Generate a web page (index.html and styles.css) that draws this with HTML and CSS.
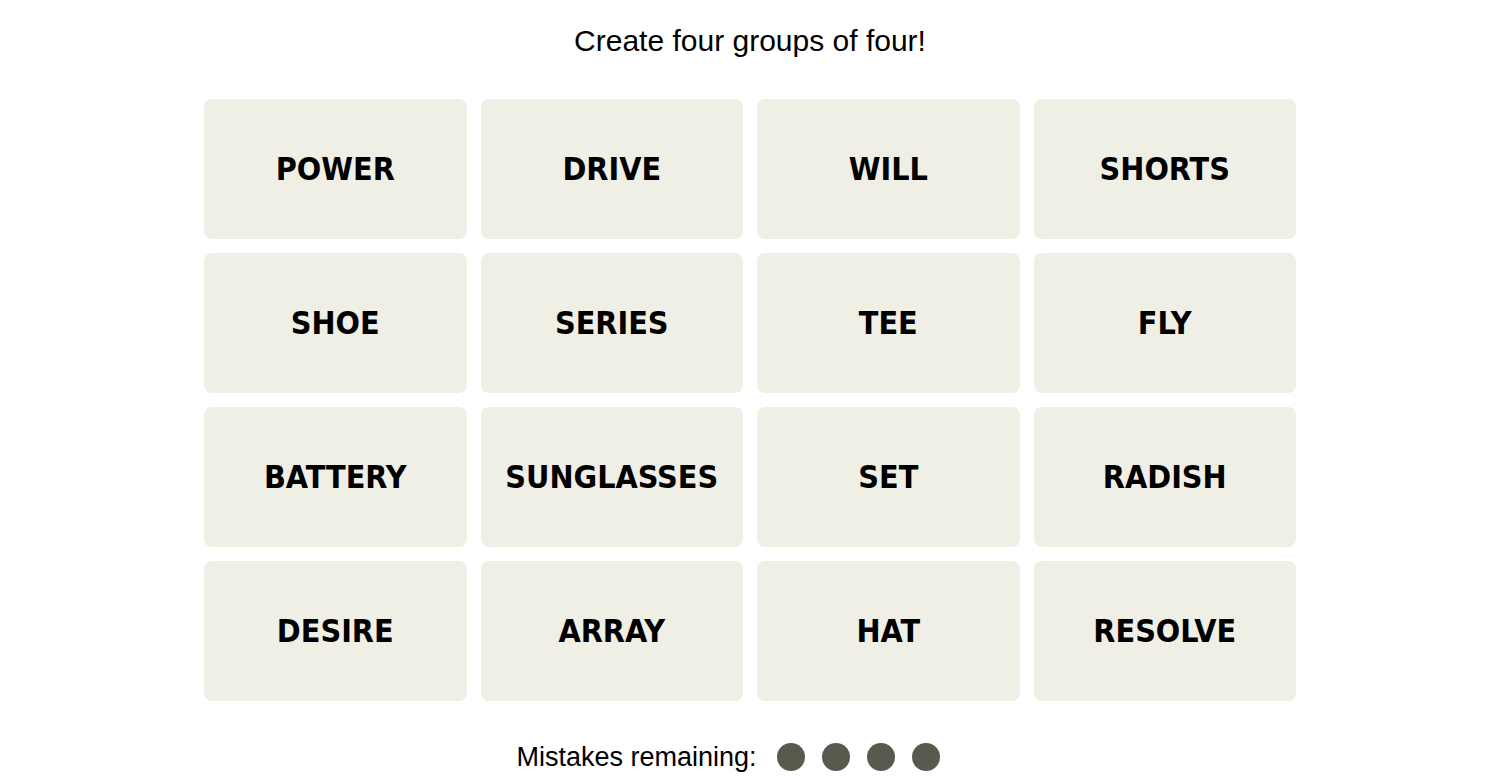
FILE: index.html
```html
<!DOCTYPE html>
<html lang="en">
    <head>
        <meta charset="utf-8">
        <title>Connections</title>
        <link rel="stylesheet" href="styles.css">
    </head>
    <body>
        <main class="game">
            <p class="prompt">Create four groups of four!</p>
            <div class="board">
                <button class="tile">POWER</button>
                <button class="tile">DRIVE</button>
                <button class="tile">WILL</button>
                <button class="tile">SHORTS</button>
                <button class="tile">SHOE</button>
                <button class="tile">SERIES</button>
                <button class="tile">TEE</button>
                <button class="tile">FLY</button>
                <button class="tile">BATTERY</button>
                <button class="tile">SUNGLASSES</button>
                <button class="tile">SET</button>
                <button class="tile">RADISH</button>
                <button class="tile">DESIRE</button>
                <button class="tile">ARRAY</button>
                <button class="tile">HAT</button>
                <button class="tile">RESOLVE</button>
            </div>
            <div class="mistakes">
                <span>Mistakes remaining:</span>
                <div class="dots">
                    <span class="dot"></span>
                    <span class="dot"></span>
                    <span class="dot"></span>
                    <span class="dot"></span>
                </div>
            </div>
        </main>
    </body>
</html>
```

FILE: styles.css
```css
body {
    margin: 0;
    background: #fff;
    color: #000;
    font-family: "Liberation Sans", Arial, sans-serif;
}
.game {
    display: flex;
    flex-direction: column;
    align-items: center;
}
.prompt {
    margin: 22px 0 0;
    font-size: 30px;
    line-height: 38px;
}
.board {
    margin-top: 39px;
    width: 1092px;
    display: grid;
    grid-template-columns: repeat(4, 1fr);
    grid-auto-rows: 140px;
    gap: 14px;
}
.tile {
    border: none;
    border-radius: 8px;
    background-color: #efefe6;
    color: #000;
    font-family: "DejaVu Sans Condensed", "Liberation Sans", Arial, sans-serif;
    font-weight: bold;
    font-size: 32px;
    padding: 0;
    cursor: pointer;
}
.mistakes {
    margin-top: 41px;
    padding-right: 44px;
    display: flex;
    align-items: center;
    gap: 20px;
    font-size: 27px;
    line-height: 30px;
}
.dots {
    display: flex;
    gap: 17px;
}
.dot {
    width: 28px;
    height: 28px;
    border-radius: 50%;
    background-color: #5a594e;
}
```
